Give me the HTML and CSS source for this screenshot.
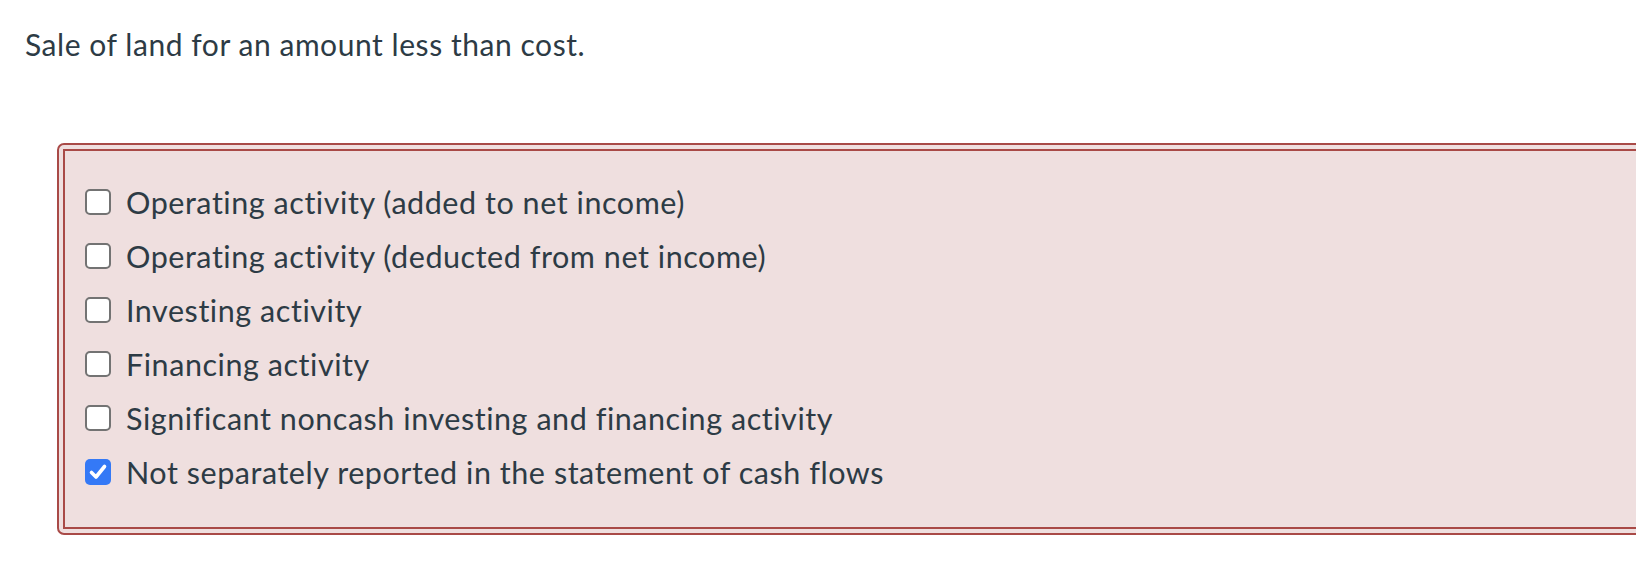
FILE: index.html
```html
<!DOCTYPE html>
<html>
<head>
<meta charset="utf-8">
<link rel="stylesheet" href="styles.css">
</head>
<body>
<div class="page">
  <p class="question">Sale of land for an amount less than cost.</p>
  <div class="answers-outer">
    <div class="answers-inner">
      <label class="option"><span class="box"></span><span class="text">Operating activity (added to net income)</span></label>
      <label class="option"><span class="box"></span><span class="text">Operating activity (deducted from net income)</span></label>
      <label class="option"><span class="box"></span><span class="text">Investing activity</span></label>
      <label class="option"><span class="box"></span><span class="text">Financing activity</span></label>
      <label class="option"><span class="box"></span><span class="text">Significant noncash investing and financing activity</span></label>
      <label class="option"><span class="box checked"><svg viewBox="0 0 26 26" width="26" height="26"><path d="M6.5 13.5 L11 18 L19.5 7.5" fill="none" stroke="#fff" stroke-width="3.6" stroke-linecap="round" stroke-linejoin="round"/></svg></span><span class="text">Not separately reported in the statement of cash flows</span></label>
    </div>
  </div>
</div>
</body>
</html>
```

FILE: styles.css
```css
html, body {
  margin: 0;
  padding: 0;
  overflow: hidden;
  background: #fff;
}
.page {
  font-family: Lato, "Open Sans", sans-serif;
  color: #2d3b45;
  font-size: 30px;
  padding: 0 0 0 25px;
}
.question {
  margin: 0;
  padding-top: 22px;
  line-height: 44px;
  letter-spacing: 0.55px;
}
.answers-outer {
  margin-top: 77px;
  margin-left: 32px;
  width: 1700px;
  border: 2px solid #a94a47;
  border-radius: 7px;
  padding: 4px;
  background: #efdfdf;
}
.answers-inner {
  border: 2px solid #a94a47;
  background: #efdfdf;
  padding: 24px 20px 28px;
  display: flex;
  flex-direction: column;
}
.option {
  display: flex;
  align-items: center;
  height: 54px;
  gap: 15px;
}
.box {
  box-sizing: border-box;
  width: 26px;
  height: 26px;
  border: 2px solid #737373;
  border-radius: 5px;
  background: #fff;
  flex: none;
  display: flex;
}
.box.checked {
  border: none;
  background: #3479f6;
}
.text {
  white-space: nowrap;
  font-size: 30.5px;
  letter-spacing: 0.55px;
}
```
